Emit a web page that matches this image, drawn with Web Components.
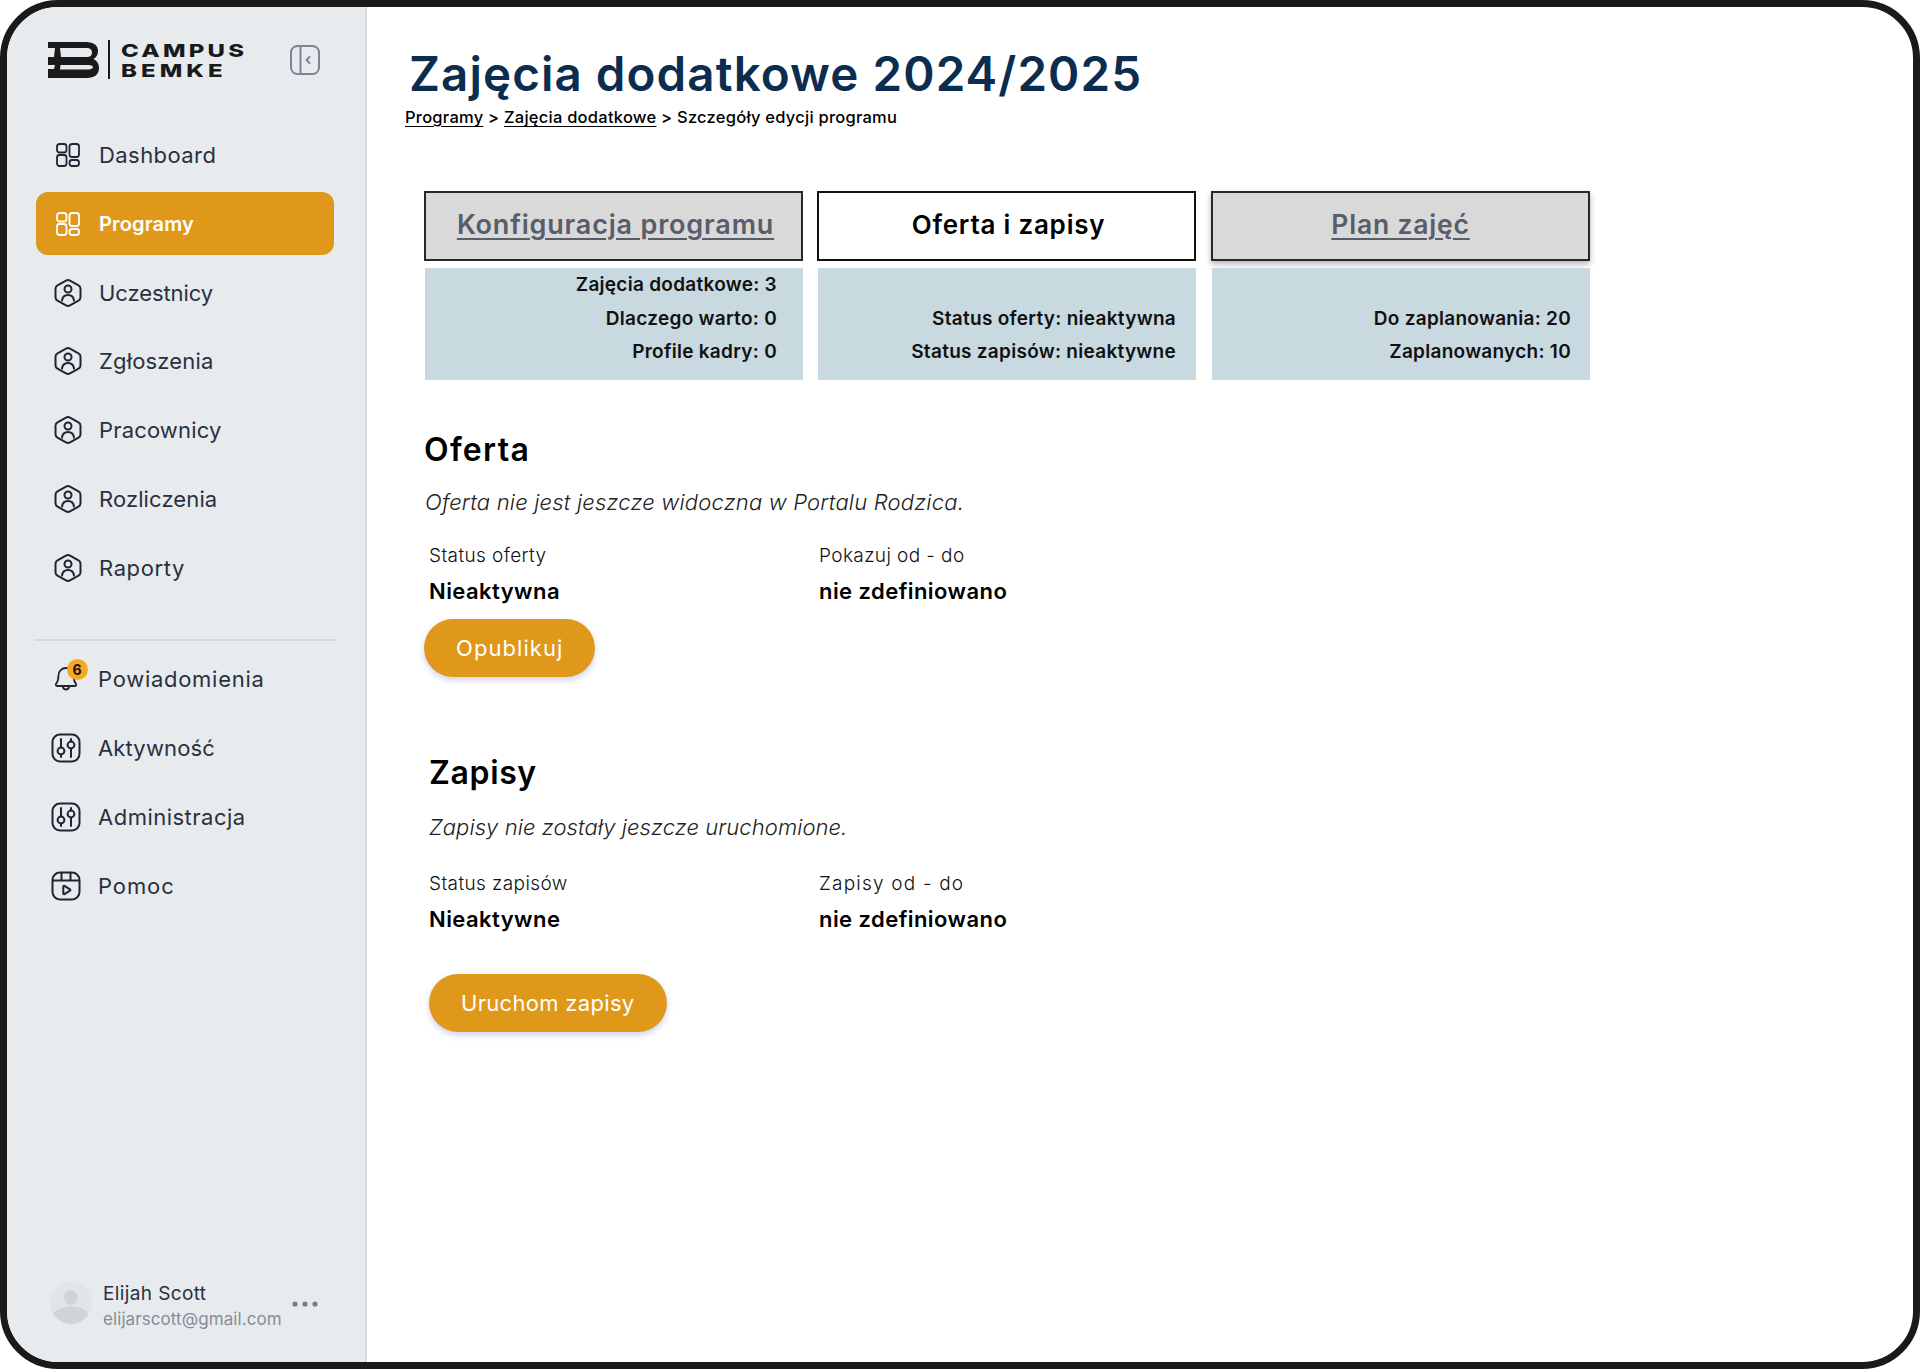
<!DOCTYPE html>
<html lang="pl"><head><meta charset="utf-8"><title>Zajęcia dodatkowe</title>
<style>html,body{margin:0;background:#fff}body{font-family:Inter,"Noto Sans",sans-serif}</style></head>
<body>
<app-frame>
  <side-bar slot="side"></side-bar>
  <main-view slot="main"></main-view>
</app-frame>
<template id="ic-grid"><svg viewBox="0 0 24 24" width="24" height="24" fill="none" stroke="currentColor" stroke-width="1.8"><rect x="1" y="1" width="9.500" height="8.500" rx="2.500"/><rect x="1" y="12" width="9.500" height="11" rx="2.500"/><rect x="13.500" y="1" width="9.500" height="13" rx="2.500"/><rect x="13.500" y="17" width="9.500" height="6" rx="2.500"/></svg></template>
<template id="ic-hex"><svg viewBox="0 0 28 30" width="28" height="30" fill="none" stroke="currentColor" stroke-width="2" stroke-linejoin="round" stroke-linecap="round"><path d="M12 2.600Q14 1.500 16 2.600L24.500 7.400Q26.500 8.500 26.500 10.800V19.200Q26.500 21.500 24.500 22.600L16 27.400Q14 28.500 12 27.400L3.500 22.600Q1.500 21.500 1.500 19.200V10.800Q1.500 8.500 3.500 7.400Z"/><circle cx="14" cy="11" r="3.500"/><path d="M8 22.500c.5-3.500 3-5.500 6-5.500s5.500 2 6 5.500"/></svg></template>
<template id="ic-sliders"><svg viewBox="0 0 30 30" width="30" height="30" fill="none" stroke="currentColor" stroke-width="2" stroke-linecap="round"><rect x="1.500" y="1.500" width="27" height="27" rx="7.500"/><path d="M10 6v8.500M10 21.500v2.500M20 6v2.500M20 15.500V24"/><circle cx="10" cy="18" r="3.400"/><circle cx="20" cy="12" r="3.400"/></svg></template>
<template id="ic-play"><svg viewBox="0 0 30 30" width="30" height="30" fill="none" stroke="currentColor" stroke-width="2" stroke-linejoin="round"><rect x="1.500" y="1.500" width="27" height="27" rx="7.500"/><path d="M1.500 9.500h27M10.500 1.500v8M19.500 1.500v8"/><path d="M12.300 15.500a.8.800 0 0 1 1.200-.7l5.500 3.500a.8.800 0 0 1 0 1.400l-5.500 3.500a.8.800 0 0 1-1.200-.7z"/></svg></template>
<template id="ic-bell"><svg viewBox="0 0 26 28" width="26" height="28" fill="none" stroke="currentColor" stroke-width="1.800" stroke-linejoin="round" stroke-linecap="round"><path d="M13 3a7.500 7.500 0 0 0-7.500 7.500c0 3.500-.6 6-2.300 8-.9 1.100-.3 2.500 1 2.500h17.600c1.300 0 1.900-1.400 1-2.500-1.700-2-2.300-4.500-2.300-8A7.500 7.500 0 0 0 13 3z"/><path d="M9.800 21.500c.4 2 1.600 3 3.200 3s2.800-1 3.200-3"/></svg></template>
<script>
const html = (el, s) => { el.attachShadow({mode:'open'}).innerHTML = s; };
const icon = id => document.getElementById(id).innerHTML;

class AppFrame extends HTMLElement{
  constructor(){super();html(this,`<style>
    :host{display:block;width:1920px;height:1369px;box-sizing:border-box;border:7px solid #1a1a1a;border-radius:58px;overflow:hidden;background:#fff}
    .g{display:grid;grid-template-columns:360px 1fr;height:100%}
  </style><div class="g"><slot name="side"></slot><slot name="main"></slot></div>`)}
}
class NavItem extends HTMLElement{
  constructor(){super();const ic=this.getAttribute('icon');const badge=this.getAttribute('badge');
  html(this,`<style>
    :host{display:flex;align-items:center;height:63px;margin:0 31px 0 29px;padding-left:var(--pad,17px);border-radius:12px;color:#1f2533;font-size:22px;box-sizing:border-box;gap:var(--gap,16px)}
    :host([active]){background:#df9819;color:#fff;font-weight:600;font-size:20px}
    .t{color:#2a3040}
    :host([active]) .t{color:#fff}
    .i{position:relative;display:flex;width:30px;height:30px;align-items:center;justify-content:center;flex:none}
    .b{position:absolute;left:15.500px;top:-5.500px;width:21px;height:21px;border-radius:50%;background:#f7a823;color:#111;font-size:14px;font-weight:700;letter-spacing:0;display:flex;align-items:center;justify-content:center}
  </style><span class="i">${icon(ic)}${badge?`<span class="b">${badge}</span>`:''}</span><span class="t"><slot></slot></span>`)}
}
class SideBar extends HTMLElement{
  constructor(){super();html(this,`<style>
    :host{display:flex;flex-direction:column;background:#e7ebee;border-right:2px solid #d6dce2;box-sizing:border-box;height:1355px;color:#2a3040}
    .top{display:flex;align-items:center;padding:34px 0 0 41px;height:37px}
    .logo{flex:none;display:block}
    .rule{width:2px;height:39px;background:#1a1a1a;margin:0 11px 0 8px;flex:none}
    .wm{font-weight:800;font-size:18px;line-height:19.500px;color:#1a1a1a;width:169px;margin-top:2px}
    .wm div{width:max-content;transform-origin:0 50%;transform:scaleX(1.33);letter-spacing:.135em}
    .wm div:last-child{letter-spacing:.17em}
    .col{flex:none;display:block;color:#7b8496}
    nav{display:grid;row-gap:5.800px;padding-top:45.500px}
    hr{border:0;height:2px;background:#d4d9de;margin:40px 29px 0 27px}
    nav.n2{padding-top:6.500px;--pad:15px;--gap:17px}
    .sp{flex:1}
    .user{display:flex;align-items:center;padding:0 0 30px 43px;}
    .av{width:42px;height:42px;flex:none;margin-top:-5px}
    .nm{font-size:19px;letter-spacing:.02em;color:#2a3040;line-height:26px}
    .em{font-size:17px;letter-spacing:.005em;color:#868d9a;line-height:25px}
    .who{margin-left:11px;width:189px;margin-top:2px}
    .dots{flex:none;margin-top:-4px}
  </style>
  <div class="top">
    <svg class="logo" viewBox="0 0 52 38" width="52" height="38"><path fill="#1a1a1a" fill-rule="evenodd" d="M0 1H38C46 1 50 4.500 50 10C50 13.500 48.500 16.500 45.500 18C49 19.500 51 22.500 51 27C51 33.500 46.500 37 39 37H0V28H6L7 24H0V16H6L7 7H0ZM12 7 13 16H39C42 16 44 14.500 44 11.500C44 8.500 42 7 39 7ZM12.500 24 12 28.500H40C43 28.500 45 27.500 45 26C45 24.800 43 24 40 24Z"/></svg>
    <span class="rule"></span>
    <div class="wm"><div>CAMPUS</div><div>BEMKE</div></div>
    <svg class="col" viewBox="0 0 30 30" width="30" height="30" fill="none" stroke="currentColor" stroke-width="2" stroke-linecap="round" stroke-linejoin="round"><rect x="1" y="1" width="28" height="28" rx="6.500"/><path d="M10.500 1v28M19.500 12l-3 3 3 3"/></svg>
  </div>
  <nav>
    <nav-item icon="ic-grid" style="letter-spacing:.43px">Dashboard</nav-item>
    <nav-item icon="ic-grid" active style="letter-spacing:.14px">Programy</nav-item>
    <nav-item icon="ic-hex" style="letter-spacing:-.08px">Uczestnicy</nav-item>
    <nav-item icon="ic-hex" style="letter-spacing:.16px">Zgłoszenia</nav-item>
    <nav-item icon="ic-hex" style="letter-spacing:.16px">Pracownicy</nav-item>
    <nav-item icon="ic-hex" style="letter-spacing:.11px">Rozliczenia</nav-item>
    <nav-item icon="ic-hex" style="letter-spacing:.6px">Raporty</nav-item>
  </nav>
  <hr>
  <nav class="n2">
    <nav-item icon="ic-bell" badge="6" style="letter-spacing:.72px">Powiadomienia</nav-item>
    <nav-item icon="ic-sliders" style="letter-spacing:.16px">Aktywność</nav-item>
    <nav-item icon="ic-sliders" style="letter-spacing:.49px">Administracja</nav-item>
    <nav-item icon="ic-play" style="letter-spacing:.9px">Pomoc</nav-item>
  </nav>
  <div class="sp"></div>
  <div class="user">
    <svg class="av" viewBox="0 0 42 42"><circle cx="21" cy="21" r="21" fill="#e1e4e9"/><circle cx="21" cy="15.500" r="7" fill="#cfd3da"/><path d="M3.500 32c3-5 9.500-7.500 17.500-7.500S35.500 27 38.500 32C34.500 38 28 42 21 42S7.500 38 3.500 32z" fill="#cfd3da"/></svg>
    <div class="who"><div class="nm">Elijah Scott</div><div class="em">elijarscott@gmail.com</div></div>
    <svg class="dots" width="26" height="6" viewBox="0 0 26 6" fill="#757d8c"><circle cx="3" cy="3" r="2.600"/><circle cx="13" cy="3" r="2.600"/><circle cx="23" cy="3" r="2.600"/></svg>
  </div>`)}
}
class TabCard extends HTMLElement{
  constructor(){super();html(this,`<style>
    :host{display:grid;grid-template-rows:70px 112px;row-gap:7px;width:379px}
    .tab{box-sizing:border-box;border:2px solid #26282c;background:#d9d9d9;color:#585d6b;display:flex;align-items:center;justify-content:center;padding:0 0 4px var(--pl,0);font-size:var(--fs,26px);font-weight:600;letter-spacing:.03em;text-decoration:underline;text-decoration-thickness:2px;text-underline-offset:4px}
    :host([selected]) .tab{background:#fff;color:#000;text-decoration:none;border-color:#111}
    :host([raised]) .tab{box-shadow:0 3px 6px rgba(0,0,0,.3)}
    .info{background:#c8d9e0;margin-left:1px;display:flex;flex-direction:column;align-items:flex-end;padding:0 var(--pr,19px) 0 0;font-size:19px;font-weight:600;color:#111;letter-spacing:.28px}
    ::slotted(p){margin:0;height:33.500px;line-height:33.500px}
  </style><div class="tab">${this.getAttribute('label')}</div><div class="info"><slot></slot></div>`)}
}
class InfoField extends HTMLElement{
  constructor(){super();html(this,`<style>
    :host{display:block;width:390px}
    .l{font-size:19px;font-weight:300;color:#111;letter-spacing:var(--ls,.4px);line-height:26px}
    .v{font-size:22px;font-weight:600;color:#000;letter-spacing:.02em;line-height:28px;margin-top:8px}
  </style><div class="l">${this.getAttribute('label')}</div><div class="v">${this.getAttribute('value')}</div>`)}
}
class PillButton extends HTMLElement{
  constructor(){super();html(this,`<style>
    :host{display:inline-flex;align-items:center;height:58px;padding:0 32px;border-radius:29px;background:#df9819;color:#fff;font-size:22px;box-shadow:0 3px 6px rgba(90,100,200,.3)}
  </style><slot></slot>`)}
}
class MainView extends HTMLElement{
  constructor(){super();html(this,`<style>
    :host{display:block;padding:0 0 0 38px;color:#000}
    h1{margin:41px 0 0 4px;font-size:47.500px;line-height:52px;font-weight:600;color:#0c2d4f;letter-spacing:.023em}
    .crumb{font-size:16.500px;font-weight:500;letter-spacing:.015em;line-height:24px;margin:5px 0 0 0;height:24px}
    .crumb a{color:inherit;text-decoration:underline;text-underline-offset:3px}
    .tabs{display:flex;margin:62px 0 0 19px;column-gap:14px}
    .tabs tab-card:last-child{margin-left:1px}
    section{margin-left:19px}
    h2{font-size:32px;font-weight:600;letter-spacing:.02em;margin:0;line-height:40px}
    .it{font-style:italic;font-weight:300;font-size:22px;color:#222;line-height:30px;margin:0}
    .row{display:flex}
    .o{padding-top:49.500px}
    .o h2{letter-spacing:1.3px}
    .o .it{margin:17px 0 0 1px;letter-spacing:.19px}
    .o .row{margin:26px 0 0 5px}
    .o pill-button{margin-top:14px;letter-spacing:1.06px}
    .z{padding-top:76.500px;margin-left:24px}
    .z .it{margin-top:19px;letter-spacing:.08px}
    .z .row{margin-top:28.500px}
    .z pill-button{margin-top:41px;letter-spacing:.31px}
  </style>
  <h1>Zajęcia dodatkowe 2024/2025</h1>
  <div class="crumb"><a>Programy</a> &gt; <a>Zajęcia dodatkowe</a> &gt; Szczegóły edycji programu</div>
  <div class="tabs">
    <tab-card label="Konfiguracja programu" style="--fs:27px;--pl:4px;--pr:26px"><p>Zajęcia dodatkowe: 3</p><p>Dlaczego warto: 0</p><p>Profile kadry: 0</p></tab-card>
    <tab-card label="Oferta i zapisy" selected style="--pl:4px;--pr:20px"><p>&nbsp;</p><p>Status oferty: nieaktywna</p><p>Status zapisów: nieaktywne</p></tab-card>
    <tab-card label="Plan zajęć" raised style="--fs:26.500px"><p>&nbsp;</p><p>Do zaplanowania: 20</p><p>Zaplanowanych: 10</p></tab-card>
  </div>
  <section class="o">
    <h2>Oferta</h2>
    <p class="it">Oferta nie jest jeszcze widoczna w Portalu Rodzica.</p>
    <div class="row"><info-field label="Status oferty" value="Nieaktywna"></info-field><info-field label="Pokazuj od - do" value="nie zdefiniowano"></info-field></div>
    <pill-button>Opublikuj</pill-button>
  </section>
  <section class="z">
    <h2>Zapisy</h2>
    <p class="it">Zapisy nie zostały jeszcze uruchomione.</p>
    <div class="row"><info-field label="Status zapisów" value="Nieaktywne"></info-field><info-field label="Zapisy od - do" value="nie zdefiniowano" style="--ls:1.2px"></info-field></div>
    <pill-button>Uruchom zapisy</pill-button>
  </section>`)}
}
customElements.define('app-frame',AppFrame);
customElements.define('nav-item',NavItem);
customElements.define('side-bar',SideBar);
customElements.define('tab-card',TabCard);
customElements.define('info-field',InfoField);
customElements.define('pill-button',PillButton);
customElements.define('main-view',MainView);
</script>
</body></html>
